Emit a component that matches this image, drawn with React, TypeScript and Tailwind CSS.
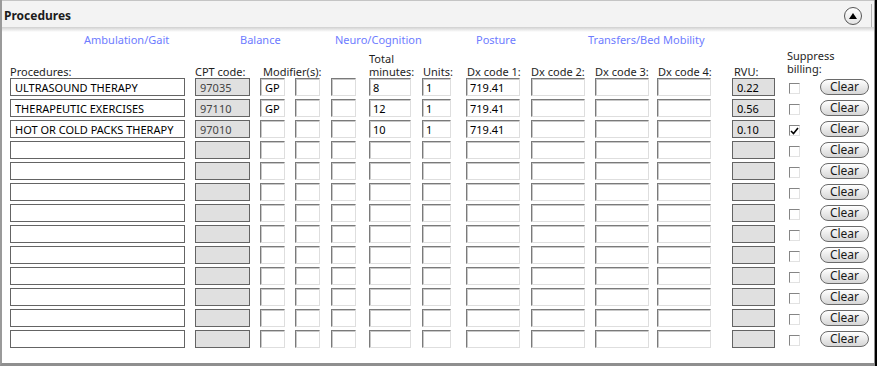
import React from "react";

type Row = {
  proc: string;
  cpt: string;
  mod: string;
  min: string;
  units: string;
  dx1: string;
  rvu: string;
  checked: boolean;
};

const filled: Row[] = [
  { proc: "ULTRASOUND THERAPY", cpt: "97035", mod: "GP", min: "8", units: "1", dx1: "719.41", rvu: "0.22", checked: false },
  { proc: "THERAPEUTIC EXERCISES", cpt: "97110", mod: "GP", min: "12", units: "1", dx1: "719.41", rvu: "0.56", checked: false },
  { proc: "HOT OR COLD PACKS THERAPY", cpt: "97010", mod: "", min: "10", units: "1", dx1: "719.41", rvu: "0.10", checked: true },
];

const empty: Row = { proc: "", cpt: "", mod: "", min: "", units: "", dx1: "", rvu: "", checked: false };

const rows: Row[] = [...filled, ...Array.from({ length: 10 }, () => empty)];

const categories = [
  { label: "Ambulation/Gait", w: "w-[156px]" },
  { label: "Balance", w: "w-[95px]" },
  { label: "Neuro/Cognition", w: "w-[141px]" },
  { label: "Posture", w: "w-[112px]" },
  { label: "Transfers/Bed Mobility", w: "w-[140px]" },
];

// dark flat box (procedure, cpt, rvu)
const flat = "block h-[18px] border border-[#646464] text-[11px] leading-[15px] outline-none";
// sunken windows style box
const sunken =
  "block h-[18px] border border-t-[#7a7a7a] border-l-[#7a7a7a] border-b-[#dedede] border-r-[#dedede] bg-white text-[11px] leading-[15px] text-black outline-none shadow-[inset_1px_1px_0_#c8c8c8]";

const Checkbox = ({ checked }: { checked: boolean }) => (
  <span className="mt-[5px] flex h-[11px] w-[11px] items-center justify-center border border-t-[#858585] border-l-[#858585] border-b-[#e2e2e2] border-r-[#e2e2e2] bg-white">
    {checked && (
      <svg width="9" height="8" viewBox="0 0 9 8">
        <path d="M1 4 L3.5 6.5 L8 1" fill="none" stroke="#000" strokeWidth="1.6" />
      </svg>
    )}
  </span>
);

const ClearButton = () => (
  <button className="mt-[1px] flex h-[16px] w-[49px] items-center justify-center rounded-full border border-[#6a6a6a] bg-gradient-to-b from-white to-[#d6d6d6] text-[12px] leading-none text-[#1a1a1a]">
    Clear
  </button>
);

const ProcRow = ({ r }: { r: Row }) => (
  <div className="flex h-[18px]">
    <div className="w-[185px]">
      <input readOnly value={r.proc} className={`${flat} w-[175px] bg-white pl-[4px] text-black`} />
    </div>
    <div className="w-[65px]">
      <input readOnly value={r.cpt} className={`${flat} w-[55px] bg-[#e0e0e0] pl-[4px] text-[#444]`} />
    </div>
    <div className="w-[35px]">
      <input readOnly value={r.mod} className={`${sunken} w-[25px] pl-[4px]`} />
    </div>
    <div className="w-[36px]">
      <input readOnly value="" className={`${sunken} w-[25px]`} />
    </div>
    <div className="w-[38px]">
      <input readOnly value="" className={`${sunken} w-[25px]`} />
    </div>
    <div className="w-[53px]">
      <input readOnly value={r.min} className={`${sunken} w-[42px] pl-[3px]`} />
    </div>
    <div className="w-[44px]">
      <input readOnly value={r.units} className={`${sunken} w-[29px] pl-[3px]`} />
    </div>
    <div className="w-[65px]">
      <input readOnly value={r.dx1} className={`${sunken} w-[54px] pl-[3px]`} />
    </div>
    <div className="w-[64px]">
      <input readOnly value="" className={`${sunken} w-[54px]`} />
    </div>
    <div className="w-[62px]">
      <input readOnly value="" className={`${sunken} w-[54px]`} />
    </div>
    <div className="w-[75px]">
      <input readOnly value="" className={`${sunken} w-[54px]`} />
    </div>
    <div className="w-[57px]">
      <input readOnly value={r.rvu} className={`${flat} w-[43px] bg-[#e0e0e0] pl-[4px] text-black`} />
    </div>
    <div className="w-[31px]">
      <Checkbox checked={r.checked} />
    </div>
    <div className="w-[49px]">
      <ClearButton />
    </div>
  </div>
);

export default function App() {
  return (
    <div className="flex h-[366px] w-[877px] bg-black font-['Noto_Sans',sans-serif]">
      <div className="flex h-[366px] w-[875px] flex-col border-b-[3px] border-l-2 border-r border-b-[#8f8f8f] border-l-[#9a9a9a] border-r-[#8f8f8f] bg-white">
        {/* title bar */}
        <div className="flex h-[27px] items-center justify-between border-t border-[#c4c4c4] bg-[#f3f3f3] pl-[2px] pt-[3px]">
          <span className="text-[12px] font-bold text-[#1c1c1c]">Procedures</span>
          <div className="flex h-full items-center">
            <button className="flex h-[18px] w-[18px] items-center justify-center rounded-full border border-[#555] bg-gradient-to-b from-white to-[#e4e4e4]">
              <svg width="8" height="6" viewBox="0 0 8 6">
                <path d="M4 0 L8 6 L0 6 Z" fill="#000" />
              </svg>
            </button>
            <div className="ml-[9px] h-full w-[1px] bg-[#b4b4b4]" />
            <div className="w-[2px]" />
          </div>
        </div>
        <div className="h-[5px] bg-gradient-to-b from-[#cfcfcf] to-white" />

        {/* category links */}
        <div className="mt-[1px] flex h-[14px] pl-[82px] text-[11px] leading-[14px] text-[#6e7cff]">
          {categories.map((c) => (
            <div key={c.label} className={c.w}>
              {c.label}
            </div>
          ))}
        </div>

        {/* column headers */}
        <div className="flex h-[31px] items-end pl-[8px] text-[11px] leading-[13px] text-[#1e1e1e]">
          <div className="w-[185px]">Procedures:</div>
          <div className="w-[65px]">CPT code:</div>
          <div className="w-[109px] pl-[3px]">Modifier(s):</div>
          <div className="w-[53px]">
            Total
            <br />
            minutes:
          </div>
          <div className="w-[44px] pl-[1px]">Units:</div>
          <div className="w-[65px] pl-[1px]">Dx code 1:</div>
          <div className="w-[64px]">Dx code 2:</div>
          <div className="w-[62px]">Dx code 3:</div>
          <div className="w-[75px] pl-[1px]">Dx code 4:</div>
          <div className="w-[55px] pl-[2px]">RVU:</div>
          <div className="w-[70px] pb-[3px]">
            Suppress
            <br />
            billing:
          </div>
        </div>

        {/* rows */}
        <div className="flex flex-col gap-[3px] pl-[8px]">
          {rows.map((r, i) => (
            <ProcRow key={i} r={r} />
          ))}
        </div>
      </div>
    </div>
  );
}
